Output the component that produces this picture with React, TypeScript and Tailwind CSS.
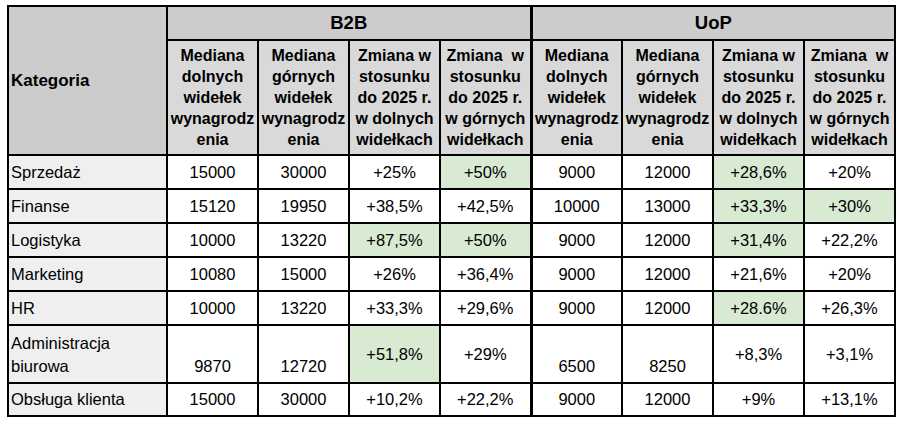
import React from "react";

type Row = { name: React.ReactNode; values: string[]; green: number[]; tall?: boolean; h: string };

const rows: Row[] = [
  { name: "Sprzedaż", values: ["15000", "30000", "+25%", "+50%", "9000", "12000", "+28,6%", "+20%"], green: [3, 6], h: "h-[34px]" },
  { name: "Finanse", values: ["15120", "19950", "+38,5%", "+42,5%", "10000", "13000", "+33,3%", "+30%"], green: [6, 7], h: "h-[34px]" },
  { name: "Logistyka", values: ["10000", "13220", "+87,5%", "+50%", "9000", "12000", "+31,4%", "+22,2%"], green: [2, 3, 6], h: "h-[34px]" },
  { name: "Marketing", values: ["10080", "15000", "+26%", "+36,4%", "9000", "12000", "+21,6%", "+20%"], green: [], h: "h-[34px]" },
  { name: "HR", values: ["10000", "13220", "+33,3%", "+29,6%", "9000", "12000", "+28.6%", "+26,3%"], green: [6], h: "h-[34px]" },
  {
    name: (
      <>
        Administracja
        <br />
        biurowa
      </>
    ),
    values: ["9870", "12720", "+51,8%", "+29%", "6500", "8250", "+8,3%", "+3,1%"],
    green: [2],
    h: "h-[58px]",
  },
  { name: "Obsługa klienta", values: ["15000", "30000", "+10,2%", "+22,2%", "9000", "12000", "+9%", "+13,1%"], green: [], h: "h-[32px]" },
];

const subHeaders: React.ReactNode[] = [
  <>Mediana<br />dolnych<br />widełek<br />wynagrodz<br />enia</>,
  <>Mediana<br />górnych<br />widełek<br />wynagrodz<br />enia</>,
  <>Zmiana w<br />stosunku<br />do 2025 r.<br />w dolnych<br />widełkach</>,
  <>Zmiana&nbsp; w<br />stosunku<br />do 2025 r.<br />w górnych<br />widełkach</>,
];

export default function App() {
  return (
    <div className="min-h-screen bg-white pl-[7px] pt-[5px] font-['Liberation_Sans',Arial,sans-serif] text-black">
      <table className="w-[887px] table-fixed border-collapse border-2 border-black">
        <colgroup>
          <col className="w-[159px]" />
          {Array.from({ length: 8 }).map((_, i) => (
            <col key={i} className="w-[91px]" />
          ))}
        </colgroup>
        <thead>
          <tr className="h-[34px]">
            <th rowSpan={2} className="border-2 border-black bg-[#cccccc] pl-[2px] text-left align-middle text-[17px] font-bold">
              Kategoria
            </th>
            <th colSpan={4} className="border-2 border-black bg-[#cccccc] text-center text-[18.5px] font-bold">
              B2B
            </th>
            <th colSpan={4} className="border-2 border-l-[3px] border-black bg-[#cccccc] text-center text-[18.5px] font-bold">
              UoP
            </th>
          </tr>
          <tr className="h-[115px]">
            {[0, 1].map((g) =>
              subHeaders.map((t, i) => (
                <th
                  key={`${g}-${i}`}
                  className={`border-2 border-black bg-[#d9d9d9] px-0 text-center align-middle text-[16px] leading-[21px] font-bold whitespace-nowrap ${
                    g === 1 && i === 0 ? "border-l-[3px]" : ""
                  }`}
                >
                  {t}
                </th>
              ))
            )}
          </tr>
        </thead>
        <tbody>
          {rows.map((r, ri) => (
            <tr key={ri} className={r.h}>
              <td className="border-2 border-black bg-[#efefef] py-[4px] pl-[2px] align-bottom text-[16.5px] leading-[23px] whitespace-nowrap">
                {r.name}
              </td>
              {r.values.map((v, i) => {
                const isPct = i % 4 >= 2;
                const green = r.green.includes(i);
                return (
                  <td
                    key={i}
                    className={`border-2 border-black py-[4px] text-center text-[16.5px] leading-[23px] ${
                      isPct ? "align-middle" : "align-bottom"
                    } ${green ? "bg-[#d9ead3]" : "bg-white"} ${i === 4 ? "border-l-[3px]" : ""}`}
                  >
                    {v}
                  </td>
                );
              })}
            </tr>
          ))}
        </tbody>
      </table>
    </div>
  );
}
